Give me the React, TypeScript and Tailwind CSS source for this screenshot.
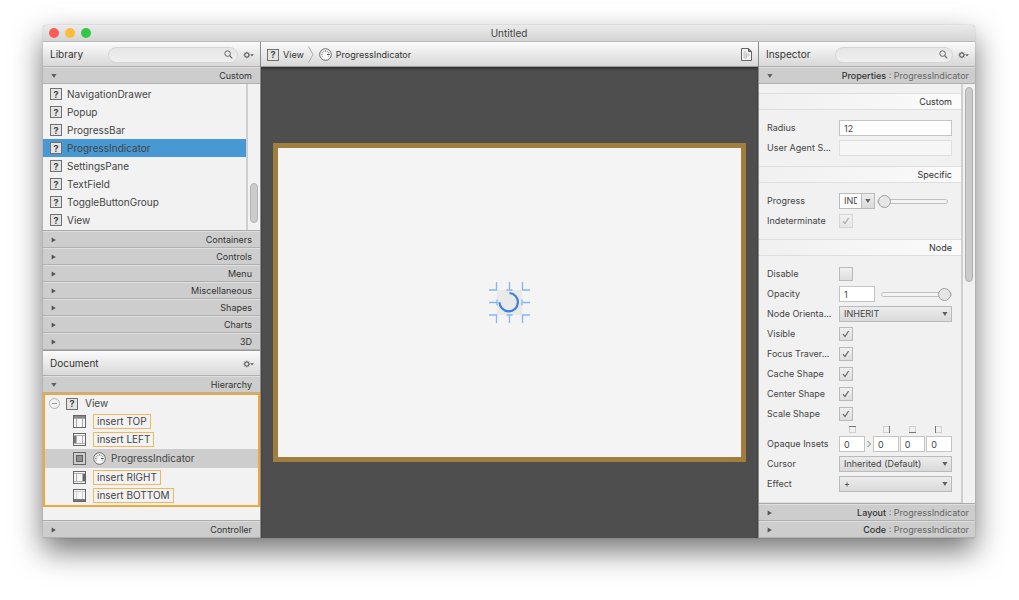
import React from 'react';
import clsx from 'clsx';

const libraryItems = [
  'NavigationDrawer',
  'Popup',
  'ProgressBar',
  'ProgressIndicator',
  'SettingsPane',
  'TextField',
  'ToggleButtonGroup',
  'View',
];

const librarySections = ['Containers', 'Controls', 'Menu', 'Miscellaneous', 'Shapes', 'Charts', '3D'];

type Side = 'top' | 'left' | 'center' | 'right' | 'bottom';

const slots: { side: Side; label: string }[] = [
  { side: 'top', label: 'insert TOP' },
  { side: 'left', label: 'insert LEFT' },
  { side: 'center', label: 'ProgressIndicator' },
  { side: 'right', label: 'insert RIGHT' },
  { side: 'bottom', label: 'insert BOTTOM' },
];

const UnknownIcon: React.FC = () => (
  <span className="flex h-3 w-3 shrink-0 items-center justify-center border border-[#707070] bg-[#e4e4e4] text-[9px] leading-none font-bold text-[#444]">
    ?
  </span>
);

const GaugeIcon: React.FC = () => (
  <svg width="13" height="13" viewBox="0 0 13 13" className="shrink-0" fill="none">
    <circle cx="6.5" cy="6.5" r="5.8" fill="#f8f8f8" stroke="#6a6a6a" />
    <path
      d="M6.5 2v1.8M4.2 2.6l.9 1.5M2.6 4.2l1.5.9M2 6.5h1.6M2.6 8.8l1.2-.7M8.8 2.6l-.9 1.5M10.4 4.2l-1.5.9M10.2 8.6l-1-.6"
      stroke="#777"
      strokeWidth="0.8"
    />
    <path d="M8 6.5h2.8" stroke="#555" />
  </svg>
);

const SlotIcon: React.FC<{ side: Side }> = ({ side }) => (
  <svg width="13" height="13" viewBox="0 0 13 13" className="shrink-0" fill="none" shapeRendering="crispEdges">
    <rect x="0.5" y="0.5" width="12" height="12" fill="#f6f6f6" stroke="#666" />
    {side === 'top' && (
      <>
        <rect x="1" y="1" width="11" height="2" fill="#888" />
        <path d="M1 3.5h11M3.5 4v8M9.5 4v8" stroke="#aaa" />
      </>
    )}
    {side === 'bottom' && (
      <>
        <rect x="1" y="10" width="11" height="2" fill="#777" />
        <path d="M1 2.5h11M3.5 3v7M9.5 3v7" stroke="#ccc" />
      </>
    )}
    {side === 'left' && (
      <>
        <rect x="1" y="3" width="2" height="7" fill="#777" />
        <path d="M1 2.5h11M1 10.5h11M3.5 3v7M9.5 3v7" stroke="#b0b0b0" />
      </>
    )}
    {side === 'right' && (
      <>
        <rect x="10" y="3" width="2" height="7" fill="#666" />
        <path d="M1 2.5h11M1 10.5h11M3.5 3v7M9.5 3v7" stroke="#b0b0b0" />
      </>
    )}
    {side === 'center' && (
      <>
        <rect x="1" y="1" width="11" height="11" fill="#ccc" />
        <rect x="3.5" y="3.5" width="6" height="6" fill="#909090" stroke="#606060" />
      </>
    )}
  </svg>
);

const DownArrow: React.FC = () => (
  <svg width="6" height="4" viewBox="0 0 6 4" className="shrink-0">
    <path d="M0.3 0h5.2L2.9 4z" fill="#606060" />
  </svg>
);

const RightArrow: React.FC = () => (
  <svg width="6" height="6" viewBox="0 0 6 6" className="shrink-0">
    <path d="M0.6 0.5v5L4.8 3z" fill="#555" />
  </svg>
);

const GearButton: React.FC<{ label: string }> = ({ label }) => (
  <button aria-label={label} className="shrink-0">
    <svg width="11" height="8" viewBox="0 0 11 8" fill="none">
      <circle cx="3.8" cy="4" r="2.1" stroke="#666" strokeWidth="1.2" />
      <path
        d="M3.8 0.7v.8M3.8 6.5v.8M0.5 4h.8M6.3 4h.8M1.5 1.7l.5.5M5.6 5.8l.5.5M6.1 1.7l-.5.5M2 5.8l-.5.5"
        stroke="#666"
      />
      <path d="M7.2 3.2h3.6L9 5.2z" fill="#555" />
    </svg>
  </button>
);

const PanelBar: React.FC<{ title: string; search?: boolean }> = ({ title, search }) => (
  <div className="flex h-[25px] shrink-0 items-center border-b border-[#b0b0b0] bg-linear-to-b from-[#fbfbfb] to-[#d8d8d8] pt-px pr-1.5 pl-[7px] text-[10px] text-[#333]">
    <h2>{title}</h2>
    {search ? (
      <div className="relative mr-[5px] ml-[25px] h-4 flex-1">
        <input
          type="search"
          aria-label={`Search ${title}`}
          className="block h-full w-full rounded-full border border-[#d6d6d6] bg-linear-to-b from-[#e6e6e6] to-[#f0f0f0] pr-5 pl-2 outline-none"
        />
        <svg
          width="9"
          height="9"
          viewBox="0 0 9 9"
          fill="none"
          stroke="#666"
          className="pointer-events-none absolute top-[3px] right-[5px]"
        >
          <circle cx="3.6" cy="3.6" r="2.8" />
          <path d="M5.7 5.7l2.6 2.6" strokeWidth="1.2" />
        </svg>
      </div>
    ) : (
      <span className="flex-1" />
    )}
    <GearButton label={`${title} options`} />
  </div>
);

const SectionBar: React.FC<{ title: string; detail?: string; open?: boolean }> = ({ title, detail, open }) => (
  <button
    className={clsx(
      'flex h-[17px] w-full shrink-0 items-center justify-between border-t border-b border-t-[#dedede] border-b-[#b0b0b0] bg-[#cdcdcd] pl-2 text-[9px] text-[#333]',
      detail ? 'pr-1.5' : 'pr-2',
    )}
  >
    {open ? <DownArrow /> : <RightArrow />}
    <span>
      <span className={detail && 'font-medium'}>{title}</span>
      {detail && <span className="text-[#666]"> : {detail}</span>}
    </span>
  </button>
);

const LibraryPanel: React.FC = () => (
  <section className="flex flex-col">
    <PanelBar title="Library" search />
    <SectionBar title="Custom" open />
    <div className="flex border-b border-[#aaa] bg-[#f2f2f2]">
      <ul className="flex-1 border-r-2 border-[#cfcfcf] pt-px pb-px">
        {libraryItems.map((item) => (
          <li
            key={item}
            className={clsx(
              'flex h-[18px] items-center gap-[5px] pl-[7px] text-[10px] text-[#444]',
              item === 'ProgressIndicator' && 'bg-[#4899d3]',
            )}
          >
            <UnknownIcon />
            {item}
          </li>
        ))}
      </ul>
      <div className="flex w-3 flex-col items-center justify-end pb-[7px]">
        <div className="h-10 w-2 rounded-full border border-[#b4b4b4] bg-[#cbcbcb]" />
      </div>
    </div>
    {librarySections.map((name) => (
      <SectionBar key={name} title={name} />
    ))}
  </section>
);

const DocumentPanel: React.FC = () => (
  <section className="flex flex-1 flex-col border-t border-[#999]">
    <PanelBar title="Document" />
    <SectionBar title="Hierarchy" open />
    <ul className="flex h-[114px] flex-col border-2 border-[#eda93a] bg-[#f2f2f2] text-[10px] text-[#444]">
      <li className="flex h-[17px] items-center pl-1">
        <button aria-label="Collapse View" className="mr-1.5">
          <svg width="11" height="11" viewBox="0 0 11 11" fill="none" stroke="#b0b0b0">
            <circle cx="5.5" cy="5.5" r="5" />
            <path d="M3 5.5h5" stroke="#999" />
          </svg>
        </button>
        <UnknownIcon />
        <span className="ml-[7px]">View</span>
      </li>
      {slots.map(({ side, label }) => (
        <li
          key={side}
          className={clsx('flex flex-1 items-center pl-7', side === 'center' && 'bg-[#cdcdcd]')}
        >
          <SlotIcon side={side} />
          {side === 'center' ? (
            <span className="ml-[7px] flex items-center gap-[5px]">
              <GaugeIcon />
              {label}
            </span>
          ) : (
            <span className="ml-[7px] border border-[#f0b75c] px-[3px] leading-[13px]">{label}</span>
          )}
        </li>
      ))}
    </ul>
    <div className="flex-1 border-b border-[#aaa] bg-[#f2f2f2]" />
    <SectionBar title="Controller" />
  </section>
);

const SelectionHandles: React.FC = () => (
  <svg width="41" height="41" viewBox="0 0 41 41" fill="none">
    <rect x="8" y="8" width="25" height="25" fill="#e9e9e9" />
    <g stroke="#84b6f3" strokeWidth="1.3">
      <path d="M7.5 0v8H0M33.5 0v8H41M7.5 41v-8H0M33.5 41v-8H41" />
      <path d="M20.5 0v8M17.5 8h6M20.5 41v-8M17.5 33h6M0 20.5h8M8 17.5v6M41 20.5h-8M33 17.5v6" />
    </g>
    <path d="M20.5 11a9.2 9.2 0 1 1-10 9.2" stroke="#3a80df" strokeWidth="2.2" />
  </svg>
);

const Editor: React.FC = () => (
  <main className="flex min-w-0 flex-1 flex-col border-x border-[#8a8a8a]">
    <nav className="flex h-[25px] shrink-0 items-center border-b border-[#999] bg-linear-to-b from-[#fbfbfb] to-[#d8d8d8] pt-px pr-1.5 pl-1.5 text-[9px] text-[#333]">
      <UnknownIcon />
      <a href="#view" className="ml-1">
        View
      </a>
      <svg width="6" height="17" viewBox="0 0 6 17" fill="none" stroke="#aaa" className="mr-[5px] ml-1">
        <path d="M0.5 0.5l4.5 8-4.5 8" />
      </svg>
      <GaugeIcon />
      <a href="#indicator" className="ml-1">
        ProgressIndicator
      </a>
      <button aria-label="Show document" className="ml-auto">
        <svg width="11" height="13" viewBox="0 0 11 13" fill="none">
          <path d="M0.5 0.5h7l3 3v9h-10z" fill="#f4f4f4" stroke="#666" />
          <path d="M7.5 0.5v3h3" fill="#888" stroke="#555" />
          <path d="M3 4h2.5M3 6h5M3 8h5M3 10h3M3 4v6M5.5 5.5v4.5M8 6v2" stroke="#bbb" strokeWidth="0.8" />
        </svg>
      </button>
    </nav>
    <div className="flex flex-1 items-center bg-[#4e4e4e] px-3 shadow-[inset_0_2px_2px_rgba(0,0,0,0.35)]">
      <div className="flex h-[319px] flex-1 items-center justify-center border-[5px] border-[#a27e3e] bg-[#f4f4f4]">
        <SelectionHandles />
      </div>
    </div>
  </main>
);

const Group: React.FC<{ title: string; children: React.ReactNode }> = ({ title, children }) => (
  <section>
    <h3 className="h-[17px] border-y border-[#dedede] bg-linear-to-r from-[#f0f0f0] to-[#fbfbfb] pr-[9px] text-right text-[9px] leading-[15px] text-[#333]">
      {title}
    </h3>
    <div className="py-2 pr-[9px] pl-2">{children}</div>
  </section>
);

const Row: React.FC<{ label: string; id: string; children: React.ReactNode }> = ({ label, id, children }) => (
  <div className="flex h-5 items-center">
    <label htmlFor={id} className="w-[72px] shrink-0">
      {label}
    </label>
    {children}
  </div>
);

const TextBox: React.FC<{ id: string; value?: string; size: string; disabled?: boolean; label?: string }> = ({
  id,
  value,
  size,
  disabled,
  label,
}) => (
  <input
    id={id}
    type="text"
    aria-label={label}
    defaultValue={value}
    disabled={disabled}
    className={clsx(
      'h-4 min-w-0 border pl-1 outline-none',
      disabled ? 'border-[#dfdfdf] bg-[#f6f6f6]' : 'border-[#c4c4c4] bg-white',
      size,
    )}
  />
);

const CheckBox: React.FC<{ id: string; checked?: boolean; disabled?: boolean }> = ({ id, checked, disabled }) => (
  <span className={clsx('relative h-3.5 w-3.5', disabled && 'opacity-50')}>
    <input
      id={id}
      type="checkbox"
      defaultChecked={checked}
      disabled={disabled}
      className="peer block h-full w-full appearance-none border border-[#bababa] bg-linear-to-b from-[#f0f0f0] to-[#dedede]"
    />
    <svg
      width="8"
      height="8"
      viewBox="0 0 8 8"
      fill="none"
      stroke="#666"
      strokeWidth="1.2"
      className="pointer-events-none invisible absolute top-[3px] left-[3px] peer-checked:visible"
    >
      <path d="M1 4.2l2 2.4L6.6 1" />
    </svg>
  </span>
);

const Slider: React.FC<{ label: string; value: number }> = ({ label, value }) => (
  <input
    type="range"
    aria-label={label}
    min={0}
    max={100}
    defaultValue={value}
    className="h-[13px] min-w-0 flex-1 appearance-none bg-transparent [&::-webkit-slider-runnable-track]:h-[5px] [&::-webkit-slider-runnable-track]:rounded-full [&::-webkit-slider-runnable-track]:border [&::-webkit-slider-runnable-track]:border-[#c0c0c0] [&::-webkit-slider-runnable-track]:bg-[#f4f4f4] [&::-webkit-slider-thumb]:-mt-[5px] [&::-webkit-slider-thumb]:h-[13px] [&::-webkit-slider-thumb]:w-[13px] [&::-webkit-slider-thumb]:appearance-none [&::-webkit-slider-thumb]:rounded-full [&::-webkit-slider-thumb]:border [&::-webkit-slider-thumb]:border-[#a0a0a0] [&::-webkit-slider-thumb]:bg-[#e6e6e6]"
  />
);

const Dropdown: React.FC<{ id: string; value: string }> = ({ id, value }) => (
  <span className="relative h-4 flex-1">
    <select
      id={id}
      defaultValue={value}
      className="block h-full w-full appearance-none border border-[#bababa] bg-linear-to-b from-[#ececec] to-[#dadada] pl-1 leading-[14px] outline-none"
    >
      <option>{value}</option>
    </select>
    <span className="pointer-events-none absolute top-1.5 right-1">
      <DownArrow />
    </span>
  </span>
);

const InsetIcon: React.FC<{ side: Side }> = ({ side }) => (
  <svg width="7" height="7" viewBox="0 0 7 7" fill="none" shapeRendering="crispEdges">
    <rect x="0.5" y="0.5" width="6" height="6" stroke="#d0d0d0" />
    {side === 'top' && <path d="M0 0.5h7" stroke="#777" />}
    {side === 'right' && <path d="M6.5 0v7" stroke="#777" />}
    {side === 'bottom' && <path d="M0 6.5h7" stroke="#777" />}
    {side === 'left' && <path d="M0.5 0v7" stroke="#777" />}
  </svg>
);

const toggles = ['Visible', 'Focus Traver...', 'Cache Shape', 'Center Shape', 'Scale Shape'];

const Inspector: React.FC = () => (
  <aside className="flex w-[216px] shrink-0 flex-col">
    <PanelBar title="Inspector" search />
    <SectionBar title="Properties" detail="ProgressIndicator" open />
    <div className="flex flex-1 border-b border-[#aaa] bg-[#f1f1f1]">
      <div className="min-w-0 flex-1 border-r-2 border-[#cfcfcf] pt-[9px] text-[9px] text-[#444]">
        <Group title="Custom">
          <Row label="Radius" id="radius">
            <TextBox id="radius" value="12" size="flex-1" />
          </Row>
          <Row label="User Agent S..." id="user-agent">
            <TextBox id="user-agent" size="flex-1" disabled />
          </Row>
        </Group>
        <Group title="Specific">
          <Row label="Progress" id="progress">
            <span className="mr-0.5 flex h-4 w-9 border border-[#bababa]">
              <input
                id="progress"
                type="text"
                defaultValue="INDETERMINATE"
                className="w-[21px] bg-white pr-1 pl-1 outline-none"
              />
              <button
                aria-label="Progress values"
                className="flex flex-1 items-center justify-center border-l border-[#bababa] bg-linear-to-b from-[#ececec] to-[#dadada]"
              >
                <DownArrow />
              </button>
            </span>
            <Slider label="Progress amount" value={0} />
            <span className="w-1" />
          </Row>
          <Row label="Indeterminate" id="indeterminate">
            <CheckBox id="indeterminate" checked disabled />
          </Row>
        </Group>
        <Group title="Node">
          <Row label="Disable" id="disable">
            <CheckBox id="disable" />
          </Row>
          <Row label="Opacity" id="opacity">
            <TextBox id="opacity" value="1" size="mr-1.5 w-9" />
            <Slider label="Opacity amount" value={100} />
          </Row>
          <Row label="Node Orienta..." id="orientation">
            <Dropdown id="orientation" value="INHERIT" />
          </Row>
          {toggles.map((name) => (
            <Row key={name} label={name} id={name}>
              <CheckBox id={name} checked />
            </Row>
          ))}
          <div className="flex h-2.5 items-center pl-[72px]">
            <span className="mr-2 flex w-[26px] justify-center">
              <InsetIcon side="top" />
            </span>
            <span className="flex flex-1 justify-around">
              <InsetIcon side="right" />
              <InsetIcon side="bottom" />
              <InsetIcon side="left" />
            </span>
          </div>
          <Row label="Opaque Insets" id="inset-top">
            <TextBox id="inset-top" value="0" size="w-[26px]" />
            <svg width="8" height="8" viewBox="0 0 8 8" fill="none" stroke="#777" className="shrink-0">
              <path d="M2.5 1L5.5 4L2.5 7" />
            </svg>
            <span className="flex flex-1 gap-px">
              <TextBox id="inset-right" label="Right inset" value="0" size="w-full" />
              <TextBox id="inset-bottom" label="Bottom inset" value="0" size="w-full" />
              <TextBox id="inset-left" label="Left inset" value="0" size="w-full" />
            </span>
          </Row>
          <Row label="Cursor" id="cursor">
            <Dropdown id="cursor" value="Inherited (Default)" />
          </Row>
          <Row label="Effect" id="effect">
            <Dropdown id="effect" value="+" />
          </Row>
        </Group>
        <div className="border-t border-[#dedede]" />
      </div>
      <div className="flex w-3 flex-col items-center pt-[3px]">
        <div className="h-[195px] w-2 rounded-full border border-[#b0b0b0] bg-[#cbcbcb]" />
      </div>
    </div>
    <SectionBar title="Layout" detail="ProgressIndicator" />
    <SectionBar title="Code" detail="ProgressIndicator" />
  </aside>
);

export default function App() {
  return (
    <div className="flex min-h-screen flex-col overflow-hidden bg-white pt-[25px] pr-11 pb-[62px] pl-[43px] font-['Inter',sans-serif]">
      <div className="flex flex-1 flex-col overflow-hidden rounded-t-[4px] bg-[#cdcdcd] shadow-[0_13px_30px_rgba(0,0,0,0.55),0_0_1px_rgba(0,0,0,0.4)]">
        <header className="flex h-[17px] shrink-0 items-center border-b border-[#b8b8b8] bg-linear-to-b from-[#ebebeb] to-[#d4d4d4] px-1.5">
          <div className="flex flex-1 gap-1.5">
            <button aria-label="Close" className="h-2.5 w-2.5 rounded-full bg-[#fc5b57]" />
            <button aria-label="Minimize" className="h-2.5 w-2.5 rounded-full bg-[#fdbc40]" />
            <button aria-label="Zoom" className="h-2.5 w-2.5 rounded-full bg-[#33c748]" />
          </div>
          <h1 className="text-[10px] text-[#444]">Untitled</h1>
          <span className="flex-1" />
        </header>
        <div className="flex flex-1">
          <div className="flex w-[217px] shrink-0 flex-col">
            <LibraryPanel />
            <DocumentPanel />
          </div>
          <Editor />
          <Inspector />
        </div>
      </div>
    </div>
  );
}
